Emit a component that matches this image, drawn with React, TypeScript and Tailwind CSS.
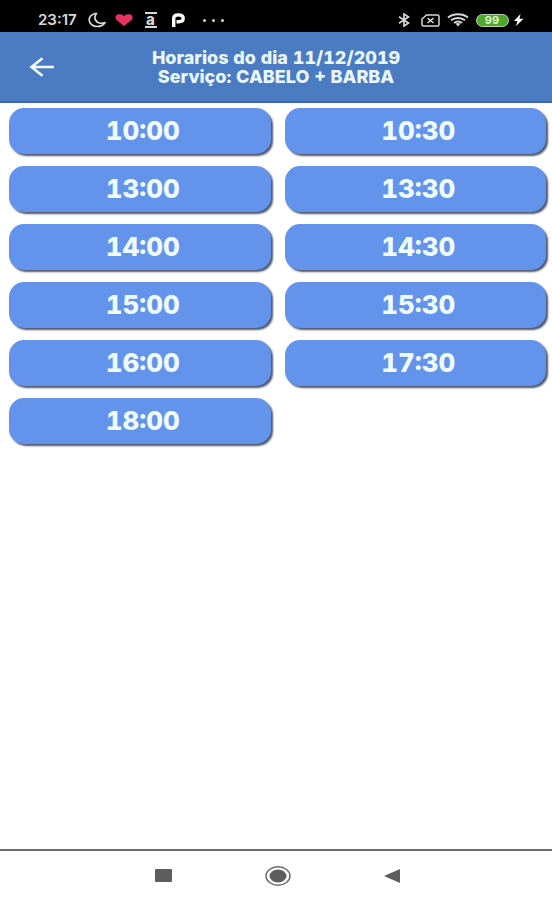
import { useState } from 'react'

const slots = [
  '10:00', '10:30',
  '13:00', '13:30',
  '14:00', '14:30',
  '15:00', '15:30',
  '16:00', '17:30',
  '18:00',
]

function StatusBar() {
  return (
    <div className="flex h-8 items-center justify-between bg-black pt-2 pr-7 pl-[38px] text-[#d8d8d8]">
      <div className="flex items-center">
        <span className="w-[45px] text-[15px] leading-5 font-semibold">23:17</span>
        <span className="flex w-[27px] justify-center">
          <svg width="18" height="16" viewBox="0 0 18 16" fill="none" stroke="currentColor" strokeWidth="1.7" strokeLinejoin="round">
            <path d="M7 1.5C3.500 2.500 1 5 1.200 8.300C1.500 12 5 14.500 9 14.500C12.500 14.500 15.500 13 17 10.500C13 11.800 9 11 7.500 8C6.500 6 6.800 3.500 8.500 1.500Z" />
          </svg>
        </span>
        <span className="flex w-[27px] justify-center">
          <svg width="18" height="12" viewBox="0 0 18 12" fill="#e8315f">
            <path d="M9 12L1.500 6C-.5 4 .5 .5 4 .3C6.500 .1 8 1 9 2.300C10 1 11.500 .1 14 .3C17.500 .5 18.500 4 16.500 6Z" />
          </svg>
        </span>
        <span className="flex w-[27px] justify-center">
          <span className="flex h-4 w-3 items-center justify-center border-y-2 border-[#d8d8d8] pb-[2px] text-[15px] leading-none font-extrabold">
            a
          </span>
        </span>
        <span className="flex w-[27px] justify-center">
          <svg width="14" height="14" viewBox="0 0 14 14" fill="none" stroke="#fff" strokeWidth="3.400">
            <path d="M2.700 14V5.500C2.700 3 4.500 1.900 7.300 1.900C10.300 1.900 12.200 3 12.200 5.200C12.200 7.600 10.300 8.700 7.500 8.700H5.500" />
          </svg>
        </span>
        <span className="flex w-[44px] justify-center gap-[6px]">
          <span className="size-[3px] rounded-full bg-[#d8d8d8]" />
          <span className="size-[3px] rounded-full bg-[#d8d8d8]" />
          <span className="size-[3px] rounded-full bg-[#d8d8d8]" />
        </span>
      </div>
      <div className="flex items-center">
        <span className="flex w-[27px] justify-center">
          <svg width="12" height="14" viewBox="0 0 12 14" fill="none" stroke="currentColor" strokeWidth="1.700">
            <path d="M1 3.800L10.500 10L6 13V1L10.500 4L1 10.200" />
          </svg>
        </span>
        <span className="flex w-[27px] justify-center">
          <svg width="19" height="13" viewBox="0 0 19 13" fill="none" stroke="currentColor" strokeWidth="1.500">
            <path d="M5.500 1H16.500Q18 1 18 2.500V10.500Q18 12 16.500 12H2.500Q1 12 1 10.500V5Z" />
            <path d="M6.500 4.200L12.500 9M12.500 4.200L6.500 9" />
          </svg>
        </span>
        <span className="flex w-[27px] justify-center">
          <svg width="22" height="14" viewBox="0 0 22 14" fill="none" stroke="currentColor" strokeWidth="2">
            <path d="M1 4.500C6.500 .2 15.500 .2 21 4.500" />
            <path d="M4 7.300C8 4.200 14 4.200 18 7.300" />
            <path d="M7 10C9.300 8.200 12.700 8.200 15 10" />
            <path d="M8.500 10.500L11 13.600L13.500 10.500Q11 9.300 8.500 10.500Z" fill="currentColor" stroke="none" />
          </svg>
        </span>
        <span className="flex w-[42px] justify-center">
          <span className="flex h-[13px] w-[33px] items-center justify-center rounded-full border border-[#b9d3ad] bg-[#4fa82c] text-[11px] leading-none font-bold text-[#dcf7c8]">
            99
          </span>
        </span>
        <svg width="11" height="12" viewBox="0 0 11 12" fill="#fff">
          <path d="M7.500 0L1 7H4.500L3 12L10.500 4.800H6.500Z" />
        </svg>
      </div>
    </div>
  )
}

export default function App() {
  const [selected, setSelected] = useState<string | null>(null)

  return (
    <div className="flex min-h-screen flex-col bg-white font-['Inter','Roboto',sans-serif]">
      <StatusBar />

      <header className="grid h-[71px] grid-cols-[84px_1fr_84px] items-center border-b-2 border-[#3c66a6] bg-[#4b7cc3]">
        <button type="button" aria-label="Voltar" className="flex justify-center">
          <svg width="26" height="20" viewBox="0 0 26 20" fill="none" stroke="#f2fbff" strokeWidth="2.600">
            <path d="M25 10H2.500M13.500 1.200L2.500 10L13.500 18.800" />
          </svg>
        </button>
        <h1 className="text-center text-lg leading-[19px] font-extrabold whitespace-nowrap text-[#e9f8ff] tabular-nums">
          Horarios do dia 11/12/2019
          <br />
          Serviço: CABELO + BARBA
        </h1>
      </header>

      <main className="grid flex-1 auto-rows-[46px] grid-cols-2 content-start gap-x-[14px] gap-y-3 pt-[5px] pr-[6px] pb-4 pl-[9px]">
        {slots.map((slot) => (
          <button
            key={slot}
            type="button"
            aria-pressed={selected === slot}
            onClick={() => setSelected(slot)}
            className="rounded-[15px] bg-[#6393ea] pl-[6px] text-[26px] leading-none font-extrabold text-[#eefbff] tabular-nums shadow-[2px_2px_2px_#4d5870]"
          >
            {slot}
          </button>
        ))}
      </main>

      <nav className="flex h-[51px] items-center justify-center gap-[86px] border-t-2 border-[#6a6a6a] pl-[3px]">
        <button type="button" aria-label="Recentes" className="flex w-7 justify-center">
          <svg width="17" height="13" viewBox="0 0 17 13" fill="#5d5d5d">
            <rect width="17" height="13" rx="1" />
          </svg>
        </button>
        <button type="button" aria-label="Início" className="flex w-7 justify-center">
          <svg width="26" height="20" viewBox="0 0 26 20">
            <ellipse cx="13" cy="10" rx="12" ry="9.200" fill="none" stroke="#6a6a6a" strokeWidth="1.500" />
            <ellipse cx="13" cy="10" rx="8.500" ry="6.500" fill="#5d5d5d" />
          </svg>
        </button>
        <button type="button" aria-label="Voltar ao anterior" className="flex w-7 justify-center">
          <svg width="16" height="14" viewBox="0 0 16 14" fill="#5d5d5d">
            <path d="M0 7L16 0V14Z" />
          </svg>
        </button>
      </nav>
    </div>
  )
}
